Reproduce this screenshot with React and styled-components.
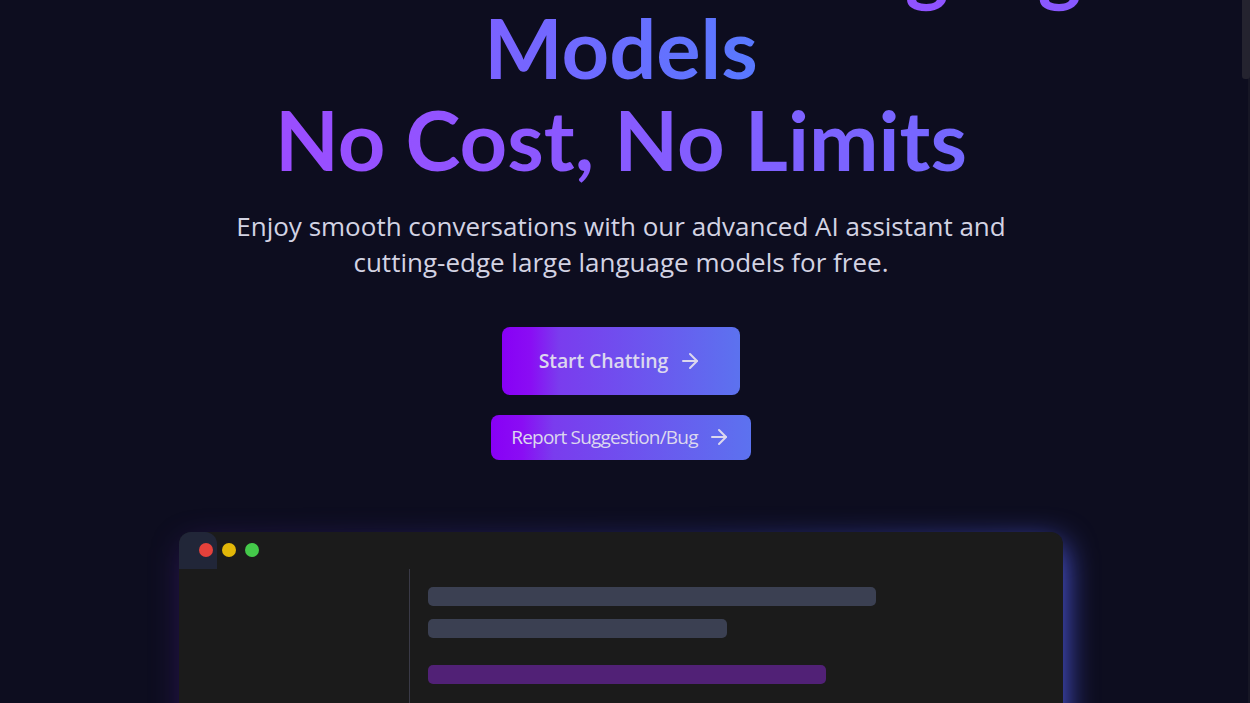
import React from "react";
import styled, { createGlobalStyle } from "styled-components";
import { ArrowRight } from "lucide-react";

const BODY_FONT = `"Open Sans", "Noto Sans", sans-serif`;
const TITLE_FONT = `Lato, "Open Sans", sans-serif`;

const GlobalStyle = createGlobalStyle`
  html { background: #0d0d1f; }
  body {
    margin: 0;
    font-family: ${BODY_FONT};
    color: #fff;
    overflow: hidden;
  }
`;

const Page = styled.div`
  display: flex;
  height: 100vh;
`;

const Main = styled.main`
  flex: 1;
  min-width: 0;
`;

const ScrollRail = styled.div`
  width: 8px;
  flex-shrink: 0;
  background: linear-gradient(90deg, transparent 6px, #161625 6px);
`;

const ScrollThumb = styled.div`
  height: 79px;
  background: #24232f;
  border-radius: 0 0 3px 3px;
`;

const Hero = styled.section`
  height: 100vh;
  overflow: hidden;
  display: flex;
  flex-direction: column;
  align-items: center;
  justify-content: center;
  text-align: center;
`;

const Title = styled.h1`
  margin: 0;
  font-family: ${TITLE_FONT};
  font-size: 83px;
  font-weight: 700;
  line-height: 83px;
  display: flex;
  flex-direction: column;
  align-items: center;
  flex-shrink: 0;
`;

const TitleLine = styled.span`
  margin-top: ${(p) => (p.$spaced ? "9px" : "0")};
  padding-bottom: 0.25em;
  margin-bottom: -0.25em;
  white-space: nowrap;
  background: linear-gradient(90deg, ${(p) => p.$from}, ${(p) => p.$to});
  -webkit-background-clip: text;
  background-clip: text;
  color: transparent;
`;

const Subtitle = styled.p`
  margin: 27px 0 0;
  max-width: 800px;
  font-size: 26px;
  line-height: 36px;
  color: #d3d3e3;
  flex-shrink: 0;
`;

const Actions = styled.div`
  margin-top: 47px;
  display: flex;
  flex-direction: column;
  align-items: center;
  gap: 20px;
  flex-shrink: 0;
`;

const GradientButton = styled.button`
  display: flex;
  align-items: center;
  gap: ${(p) => (p.$big ? "10px" : "9px")};
  height: ${(p) => (p.$big ? "68px" : "45px")};
  padding: ${(p) => (p.$big ? "0 38px 0 37px" : "0 20px")};
  border: none;
  border-radius: 8px;
  background: linear-gradient(90deg, #8800f6 0%, #8a0df4 12%, #7a3cee 24%, #5c72ef 100%);
  color: #dcd8ee;
  font-family: ${BODY_FONT};
  font-size: ${(p) => (p.$big ? "19.5px" : "19px")};
  letter-spacing: ${(p) => (p.$big ? "-0.1px" : "-0.8px")};
  font-weight: ${(p) => (p.$big ? 600 : 400)};
  cursor: pointer;
`;

const Preview = styled.div`
  position: relative;
  margin-top: 72px;
  width: 884px;
  height: 249px;
  flex-shrink: 0;
  border-radius: 12px;
  background: #1b1b1b;
  display: flex;
  flex-direction: column;
  text-align: left;

  &::before {
    content: "";
    position: absolute;
    top: 12px;
    left: 4px;
    right: 0;
    bottom: 0;
    border-radius: 12px;
    background: linear-gradient(
      90deg,
      rgba(90, 30, 170, 0.4),
      rgba(70, 80, 220, 0.65) 60%,
      rgba(88, 100, 255, 1)
    );
    filter: blur(16px);
    z-index: -1;
  }
`;

const TitleBar = styled.div`
  position: relative;
  height: 37px;
  flex-shrink: 0;
  display: flex;
  align-items: center;
  gap: 9px;
  padding-left: 20px;

  &::before {
    content: "";
    position: absolute;
    left: 0;
    top: 0;
    width: 38px;
    height: 37px;
    border-radius: 12px 12px 0 0;
    background: #212638;
  }
`;

const Dot = styled.span`
  position: relative;
  width: 14px;
  height: 14px;
  border-radius: 50%;
  background: ${(p) => p.$color};
`;

const PreviewBody = styled.div`
  flex: 1;
  display: flex;
`;

const Sidebar = styled.div`
  width: 230px;
  border-right: 1px solid #3a3a47;
`;

const Chat = styled.div`
  flex: 1;
  padding: 18px;
  display: flex;
  flex-direction: column;
  gap: 27px;
`;

const Message = styled.div`
  display: flex;
  flex-direction: column;
  gap: 13px;
`;

const Bar = styled.div`
  height: 19px;
  width: ${(p) => p.$w}px;
  border-radius: 5px;
  background: ${(p) => (p.$user ? "#512176" : "#3b4052")};
`;

export default function App() {
  return (
    <>
      <GlobalStyle />
      <Page>
        <Main>
          <Hero>
            <Title>
              <TitleLine $from="#b838ff" $to="#865aff">
                Access Advanced Language
              </TitleLine>
              <TitleLine $from="#7b62ff" $to="#5879ff">
                Models
              </TitleLine>
              <TitleLine $from="#9b4dff" $to="#7468ff" $spaced>
                No Cost, No Limits
              </TitleLine>
            </Title>
            <Subtitle>
              Enjoy smooth conversations with our advanced AI assistant and cutting-edge large
              language models for free.
            </Subtitle>
            <Actions>
              <GradientButton $big>
                Start Chatting <ArrowRight size={24} strokeWidth={2} />
              </GradientButton>
              <GradientButton>
                Report Suggestion/Bug <ArrowRight size={24} strokeWidth={2} />
              </GradientButton>
            </Actions>
            <Preview>
              <TitleBar>
                <Dot $color="#e5413b" />
                <Dot $color="#e2b708" />
                <Dot $color="#44c94a" />
              </TitleBar>
              <PreviewBody>
                <Sidebar />
                <Chat>
                  <Message>
                    <Bar $w={448} />
                    <Bar $w={299} />
                  </Message>
                  <Message>
                    <Bar $w={398} $user />
                  </Message>
                </Chat>
              </PreviewBody>
            </Preview>
          </Hero>
        </Main>
        <ScrollRail>
          <ScrollThumb />
        </ScrollRail>
      </Page>
    </>
  );
}
